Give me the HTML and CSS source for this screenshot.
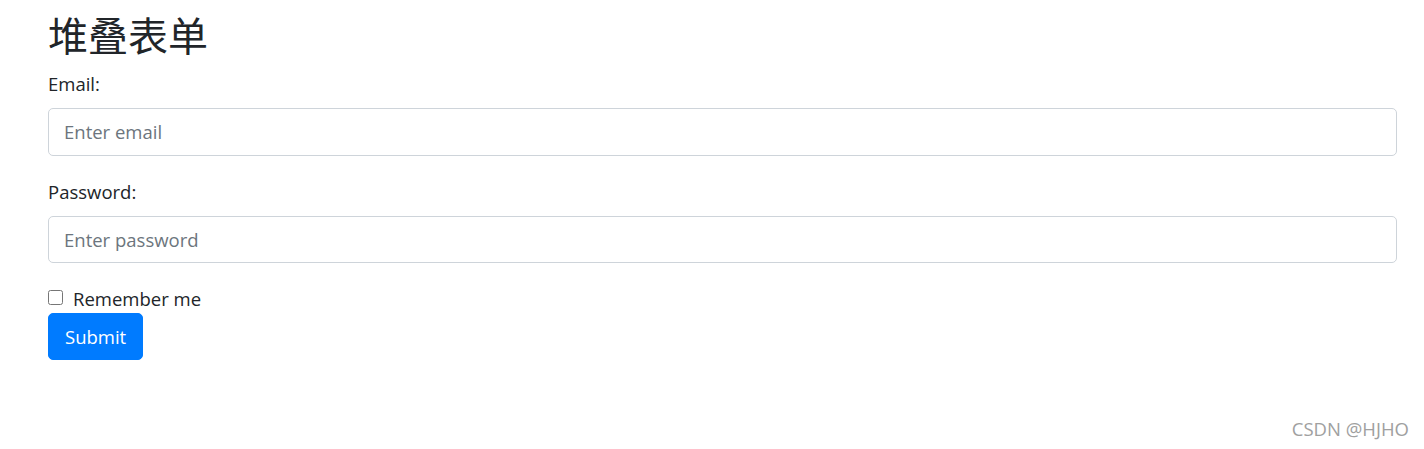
FILE: index.html
```html
<!DOCTYPE html>
<html lang="zh">
<head>
<meta charset="utf-8">
<title>堆叠表单</title>
<link rel="stylesheet" href="styles.css">
</head>
<body>
<div class="container">
  <h2 class="title">堆叠表单</h2>
  <form class="form">
    <div class="form-group">
      <label class="label" for="email">Email:</label>
      <input class="form-control" type="email" id="email" placeholder="Enter email">
    </div>
    <div class="form-group">
      <label class="label" for="pwd">Password:</label>
      <input class="form-control" type="password" id="pwd" placeholder="Enter password">
    </div>
    <div class="form-check">
      <input class="check" type="checkbox" id="remember">
      <label class="check-label" for="remember">Remember me</label>
    </div>
    <button class="btn" type="button">Submit</button>
  </form>
</div>
<div class="watermark">CSDN @HJHO</div>
</body>
</html>
```
FILE: styles.css
```css
* { box-sizing: border-box; }
html, body { margin: 0; padding: 0; }
body {
  font-family: "Open Sans", "Noto Sans", "Noto Sans CJK SC", sans-serif;
  font-size: 20px;
  line-height: 1.5;
  color: #212529;
  background: #fff;
  width: 1424px;
  height: 449px;
  position: relative;
  overflow: hidden;
}
.container {
  padding: 10px 27px 0 48px;
}
.title {
  font-family: "Noto Sans CJK SC", sans-serif;
  font-weight: 400;
  font-size: 40px;
  line-height: 48px;
  margin: 0 0 10px 0;
}
.form-group { margin-bottom: 20px; }
.label {
  display: block;
  margin-bottom: 10px;
  line-height: 30px;
  font-size: 18.5px;
  padding-top: 1px;
  height: 30px;
}
.form-control {
  display: block;
  width: 100%;
  height: 47.5px;
  padding: 7.5px 15px;
  font-family: "Open Sans", sans-serif;
  font-size: 18.5px;
  color: #495057;
  border: 1.25px solid #ced4da;
  border-radius: 5px;
  background: #fff;
  outline: none;
}
.form-control::placeholder { color: #6c757d; opacity: 1; }
.form-check {
  display: flex;
  align-items: flex-start;
  height: 30px;
  margin-top: 1px;
}
.check {
  width: 15px;
  height: 15px;
  margin: 7px 10px 0 0;
}
.check-label {
  line-height: 30px;
  font-size: 18.5px;
  padding-top: 1px;
}
.btn {
  display: block;
  height: 47px;
  padding: 0 16px;
  font-family: "Open Sans", sans-serif;
  font-size: 18.5px;
  color: #fff;
  background: #007bff;
  border: 1px solid #007bff;
  border-radius: 5px;
}
.watermark {
  position: absolute;
  right: 15px;
  top: 414px;
  font-family: "Open Sans", sans-serif;
  font-size: 18.5px;
  line-height: 30px;
  color: #a0a0a0;
}
```
